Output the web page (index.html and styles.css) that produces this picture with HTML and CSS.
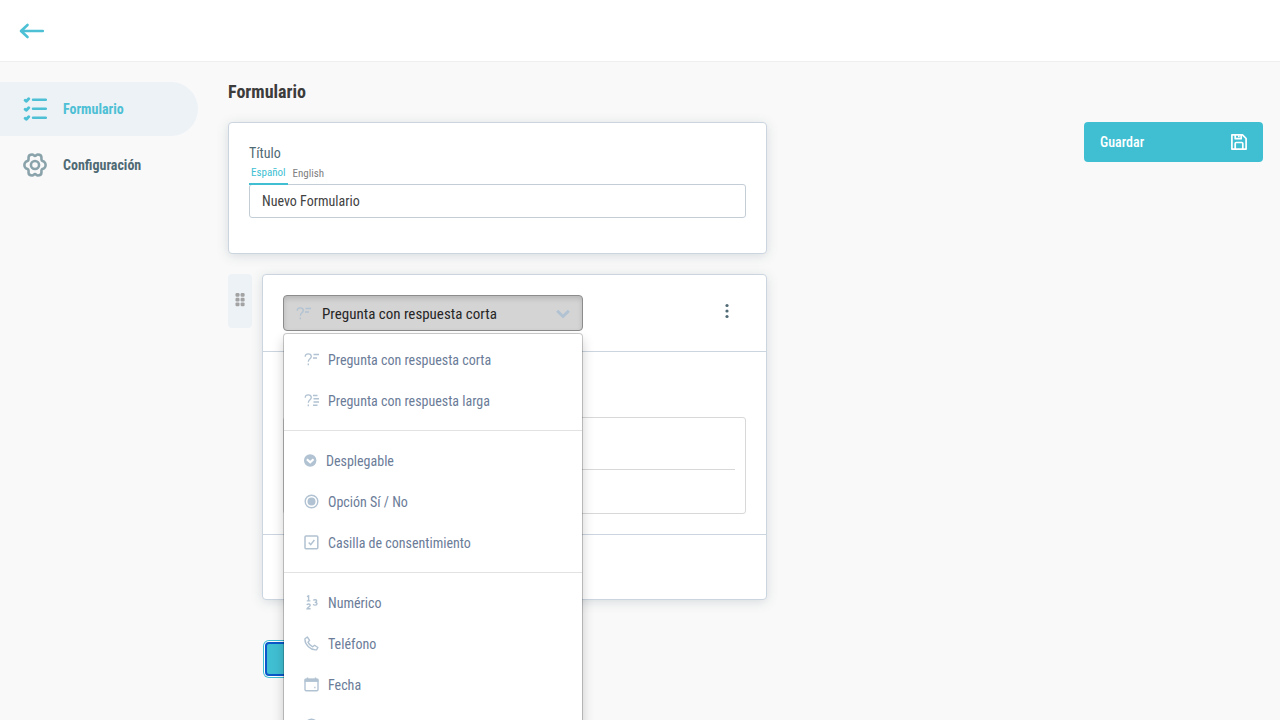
FILE: index.html
```
<!DOCTYPE html>
<html lang="es">
  <head>
    <meta charset="UTF-8" />
    <meta name="viewport" content="width=device-width, initial-scale=1.0" />
    <title>Formulario</title>
    <link rel="stylesheet" href="styles.css">
  </head>
  <body>
    <header class="topbar">
      <a href="#" class="back">
        <svg width="26" height="18" viewBox="0 0 26 18" fill="none" stroke="currentColor" stroke-width="2.6" stroke-linecap="round" stroke-linejoin="round">
          <path d="M23.800 9H2.500M8.500 3L2 9l6.500 6" />
        </svg>
      </a>
    </header>

    <div class="layout">
      <nav class="sidebar">
        <a href="#" class="nav-item active">
          <svg width="24" height="24" viewBox="0 0 24 24" fill="none" stroke="currentColor" stroke-width="2.500" stroke-linecap="round" stroke-linejoin="round">
            <path d="M10 2.700h12.800M10 11.700h12.800M10 20.700h12.800" />
            <path d="M2.200 3.400l1.200.8 2.300-2.400M2.200 12.400l1.200.8 2.300-2.400M2.200 21.400l1.200.8 2.300-2.400" stroke-width="2.900" />
          </svg>
          <span>Formulario</span>
        </a>
        <a href="#" class="nav-item">
          <svg width="24" height="24" viewBox="0 0 26 26" fill="none" stroke="#8aa3ab" stroke-width="2.800" stroke-linejoin="round">
            <path d="M10 1.700c1.500 0 1.800 1.500 3 1.500s1.500-1.500 3-1.500c2.300 0 4 1.300 4 3.300 0 1.500-.3 2.200.4 3.200.7 1 2 .6 2.900 1.600 1.600 1.600 1.600 4.800 0 6.400-.9 1-2.200.6-2.900 1.600-.7 1.100-.4 1.700-.4 3.200 0 2-1.700 3.300-4 3.300-1.500 0-1.800-1.500-3-1.500s-1.500 1.500-3 1.500c-2.300 0-4-1.300-4-3.300 0-1.500.3-2.200-.4-3.200-.7-1-2-.6-2.900-1.600-1.600-1.600-1.600-4.800 0-6.400.9-1 2.200-.6 2.900-1.600.7-1.100.4-1.700.4-3.200 0-2 1.700-3.300 4-3.300z" />
            <circle cx="13" cy="13" r="4.400" />
          </svg>
          <span>Configuración</span>
        </a>
      </nav>

      <main class="content">
        <h1>Formulario</h1>
        <div class="columns">
          <div class="form-column">
            <section class="card title-card">
              <label for="form-title">Título</label>
              <div class="tabs">
                <button type="button" class="tab selected">Español</button>
                <button type="button" class="tab">English</button>
              </div>
              <input type="text" id="form-title" value="Nuevo Formulario" />
            </section>

            <div class="question">
              <div class="handle">
                <svg width="10" height="14" viewBox="0 0 10 14" fill="#a3a3a3">
                  <rect x="0.500" y="0" width="4" height="3.800" rx="1.200" /><rect x="5.600" y="0" width="4" height="3.800" rx="1.200" />
                  <rect x="0.500" y="4.700" width="4" height="3.800" rx="1.200" /><rect x="5.600" y="4.700" width="4" height="3.800" rx="1.200" />
                  <rect x="0.500" y="9.400" width="4" height="3.800" rx="1.200" /><rect x="5.600" y="9.400" width="4" height="3.800" rx="1.200" />
                </svg>
              </div>

              <section class="card question-card">
                <div class="question-head">
                  <div class="dropdown">
                    <button type="button" class="dropdown-toggle" aria-haspopup="true" aria-expanded="true">
                      <svg width="16" height="16" viewBox="0 0 16 16" fill="none" stroke="currentColor" stroke-width="1.300">
                        <path d="M1.200 4.700C1.200 2.900 2.400 1.800 4.200 1.800s3.100 1.100 3.100 2.800c0 2.300-3 2.300-3 5.200M4.300 11.500v1.700" />
                        <path d="M9.500 2.500H15M9 6h4" stroke-width="1.500" />
                      </svg>
                      <span>Pregunta con respuesta corta</span>
                      <svg class="chevron" width="14" height="10" viewBox="0 0 14 10" fill="none" stroke="currentColor" stroke-width="3">
                        <path d="M1.200 1.800L7 7.500l5.800-5.700" />
                      </svg>
                    </button>

                    <div class="menu">
                      <button type="button" class="menu-item">
                        <svg width="16" height="16" viewBox="0 0 16 16" fill="none" stroke="currentColor" stroke-width="1.300">
                          <path d="M1.200 4.700C1.200 2.900 2.400 1.800 4.200 1.800s3.100 1.100 3.100 2.800c0 2.300-3 2.300-3 5.200M4.300 11.500v1.700" />
                          <path d="M9.500 2.500H15M9 6h4" stroke-width="1.500" />
                        </svg>
                        <span>Pregunta con respuesta corta</span>
                      </button>
                      <button type="button" class="menu-item">
                        <svg width="16" height="16" viewBox="0 0 16 16" fill="none" stroke="currentColor" stroke-width="1.300">
                          <path d="M1.200 4.700C1.200 2.900 2.400 1.800 4.200 1.800s3.100 1.100 3.100 2.800c0 2.300-3 2.300-3 5.200M4.300 11.500v1.700" />
                          <path d="M9 2.500H13.500M9.500 5.800H15M9.500 9.100H15M9 12.300h4.500" stroke-width="1.500" />
                        </svg>
                        <span>Pregunta con respuesta larga</span>
                      </button>
                      <hr />
                      <button type="button" class="menu-item">
                        <svg width="14" height="16" viewBox="0 0 14 16">
                          <circle cx="6.200" cy="7.500" r="6.200" fill="currentColor" />
                          <path d="M2.900 6.300l3.300 3 3.300-3" fill="none" stroke="#fff" stroke-width="2.200" />
                        </svg>
                        <span>Desplegable</span>
                      </button>
                      <button type="button" class="menu-item">
                        <svg width="16" height="16" viewBox="0 0 16 16">
                          <circle cx="7.500" cy="7.500" r="6.300" fill="none" stroke="currentColor" stroke-width="1.400" />
                          <circle cx="7.500" cy="7.500" r="4" fill="currentColor" />
                        </svg>
                        <span>Opción Sí / No</span>
                      </button>
                      <button type="button" class="menu-item">
                        <svg width="16" height="16" viewBox="0 0 16 16" fill="none" stroke="currentColor" stroke-width="1.500">
                          <rect x="1" y="1" width="12.800" height="12.800" rx="1" />
                          <path d="M4.700 7.500l2 2.200L10.400 5" />
                        </svg>
                        <span>Casilla de consentimiento</span>
                      </button>
                      <hr />
                      <button type="button" class="menu-item">
                        <svg width="16" height="16" viewBox="0 0 16 16" fill="none" stroke="currentColor" stroke-width="1.400">
                          <path d="M3 1.600l1.600-.8v4.700M2.800 5.900h3.600" />
                          <path d="M3 10.200c.2-1.600 3.200-1.500 3.200.1 0 1.300-2.500 1.900-3.100 3.400h3.500" />
                          <path d="M9.400 5.600c.5-1.300 3.300-1.100 3.300.4 0 1-1 1.400-2 1.400 1.100 0 2.300.4 2.300 1.400 0 1.700-3.200 1.800-3.700.3" />
                        </svg>
                        <span>Numérico</span>
                      </button>
                      <button type="button" class="menu-item">
                        <svg width="16" height="16" viewBox="0 0 16 16" fill="none" stroke="currentColor" stroke-width="1.400" stroke-linejoin="round">
                          <path d="M1 2.700L3.300 1l2.300 3.300-1.600 1.800c.9 2.100 2.500 3.700 4.700 4.700l1.900-1.600 3.300 2.300-1.400 2.300C6.800 14.400.4 8.600 1 2.700z" />
                        </svg>
                        <span>Teléfono</span>
                      </button>
                      <button type="button" class="menu-item">
                        <svg width="16" height="16" viewBox="0 0 16 16" fill="none" stroke="currentColor" stroke-width="1.400">
                          <rect x="1" y="2.200" width="13" height="11.600" rx="1.200" />
                          <path d="M.6 3.300h13.800" stroke-width="3.200" />
                          <path d="M3.500 .4v2M11.500 .4v2M10.200 10.500h1.300" />
                        </svg>
                        <span>Fecha</span>
                      </button>
                      <button type="button" class="menu-item">
                        <svg width="16" height="16" viewBox="0 0 16 16" fill="none" stroke="currentColor" stroke-width="1.400">
                          <circle cx="7.500" cy="7.500" r="6.300" />
                          <path d="M7.500 4v4l2.500 1.500" />
                        </svg>
                      </button>
                    </div>
                  </div>

                  <button type="button" class="more">
                    <svg width="4" height="16" viewBox="0 0 4 16" fill="currentColor">
                      <circle cx="2" cy="2.500" r="1.600" /><circle cx="2" cy="8" r="1.600" /><circle cx="2" cy="13.500" r="1.600" />
                    </svg>
                  </button>
                </div>

                <div class="question-body">
                  <div class="editor">
                    <div class="editor-line"></div>
                  </div>
                </div>
                <div class="question-foot"></div>
              </section>
            </div>

            <button type="button" class="add"></button>
          </div>

          <button type="button" class="save">
            <span>Guardar</span>
            <svg width="16" height="16" viewBox="0 0 16 16" fill="none" stroke="currentColor" stroke-width="1.700" stroke-linejoin="round">
              <path d="M.9 .9h10.600l3.600 3.600v10.600H.9z" />
              <path d="M4.200 .9v3.800h6V.9M7.800 1.500v1.700M4.200 15V9.500c0-.6.400-1 1-1h5.600c.6 0 1 .4 1 1V15" />
            </svg>
          </button>
        </div>
      </main>
    </div>
  </body>
</html>
```
FILE: styles.css
```
* {
  box-sizing: border-box;
}

body {
  margin: 0;
  height: 100vh;
  display: flex;
  flex-direction: column;
  overflow: hidden;
  background-color: #f9f9f9;
  color: #424242;
  font-family: "Roboto Condensed", "Liberation Sans Narrow", Roboto, sans-serif;
  font-size: 14px;
}

button,
input {
  font: inherit;
  color: inherit;
}

button {
  border: none;
  background: none;
  padding: 0;
  cursor: pointer;
}

a {
  text-decoration: none;
}

svg {
  display: block;
  flex: none;
}

.topbar {
  display: flex;
  align-items: center;
  flex: none;
  height: 62px;
  padding: 0 19px;
  background-color: #fff;
  border-bottom: 1px solid #efefef;
}

.back {
  color: #4dc0d5;
}

.layout {
  display: flex;
  flex: 1;
  min-height: 0;
}

.sidebar {
  display: flex;
  flex-direction: column;
  flex: none;
  gap: 2px;
  width: 198px;
  padding-top: 20px;
}

.nav-item {
  display: flex;
  align-items: center;
  gap: 16px;
  height: 54px;
  padding-left: 23px;
  border-radius: 0 27px 27px 0;
  color: #4f6a74;
  font-weight: 700;
}

.nav-item.active {
  background-color: #edf2f6;
  color: #4dc0d5;
}

.content {
  flex: 1;
  padding: 20px 17px 0 30px;
}

h1 {
  margin: 0 0 20px;
  font-size: 18px;
  line-height: 20px;
  font-weight: 700;
  color: #3c3c3c;
}

.columns {
  display: grid;
  grid-template-columns: minmax(0, 539px) 179px;
  justify-content: space-between;
  align-items: start;
}

.card {
  background-color: #fff;
  border: 1px solid #cbd5e0;
  border-radius: 4px;
  box-shadow: 0 2px 12px rgba(79, 106, 116, 0.2);
}

.title-card {
  display: flex;
  flex-direction: column;
  padding: 20px 20px 35px;
}

.title-card label {
  line-height: 20px;
  color: #4f6a74;
}

.tabs {
  display: flex;
  gap: 3px;
}

.tab {
  position: relative;
  height: 22px;
  padding: 0 2px 2px;
  font-size: 11px;
  color: #808080;
}

.tab.selected {
  padding-bottom: 1px;
  border-bottom: 2px solid #40bfd3;
  color: #40bfd3;
  z-index: 1;
}

.title-card input {
  height: 34px;
  margin-top: -1px;
  padding: 0 12px;
  background-color: #fff;
  border: 1px solid #c3cdd6;
  border-radius: 3px;
}

.question {
  display: flex;
  align-items: flex-start;
  gap: 10px;
  margin-top: 20px;
}

.handle {
  display: flex;
  justify-content: center;
  width: 24px;
  height: 54px;
  padding-top: 19px;
  background-color: #edf2f6;
  border-radius: 4px;
}

.question-card {
  flex: 1;
}

.question-head {
  display: flex;
  align-items: center;
  justify-content: space-between;
  padding: 20px;
}

.dropdown {
  position: relative;
  width: 300px;
}

.dropdown-toggle {
  display: flex;
  align-items: center;
  gap: 10px;
  width: 100%;
  height: 36px;
  padding: 1px 12px 0;
  background-color: #d4d4d4;
  border: 1px solid #8c8c8c;
  border-radius: 4px;
  box-shadow: inset 0 3px 5px rgba(0, 0, 0, 0.125);
  color: #b1c2d2;
  font-size: 15px;
}

.dropdown-toggle span {
  color: #262626;
}

.chevron {
  margin-left: auto;
}

.menu {
  position: absolute;
  top: 38px;
  left: 0;
  width: 100%;
  z-index: 10;
  padding: 6px 0;
  background-color: #fff;
  background-clip: padding-box;
  border: 1px solid rgba(0, 0, 0, 0.2);
  border-radius: 4px;
  box-shadow: 0 6px 12px rgba(0, 0, 0, 0.18);
}

.menu-item {
  display: flex;
  align-items: center;
  gap: 8px;
  width: 100%;
  height: 41px;
  padding: 0 20px 2px;
  color: #b1c2d2;
}

.menu-item span {
  color: #6b7c98;
}

.menu hr {
  margin: 8px 0 10px;
  border: none;
  border-top: 1px solid #e2e2e2;
}

.more {
  height: 36px;
  padding: 0 17px 4px;
  color: #4f6a74;
}

.question-body {
  padding: 65px 20px 20px;
  border-top: 1px solid #cbd5e0;
  border-bottom: 1px solid #cbd5e0;
}

.editor {
  height: 97px;
  padding: 0 10px;
  border: 1px solid #d8d8d8;
  border-radius: 3px;
}

.editor-line {
  height: 52px;
  border-bottom: 1px solid #d8d8d8;
}

.question-foot {
  height: 64px;
}

.add {
  display: block;
  width: 130px;
  height: 34px;
  margin: 42px 0 0 37px;
  background-color: #40bfd3;
  border: 2px solid #0a58ca;
  border-radius: 4px;
  box-shadow: 0 0 0 1px #fff, 0 0 0 2px #40bfd3;
}

.save {
  display: flex;
  align-items: center;
  justify-content: space-between;
  height: 40px;
  padding: 0 16px;
  background-color: #40bfd3;
  border-radius: 4px;
  color: #fff;
  font-weight: 500;
}
```
